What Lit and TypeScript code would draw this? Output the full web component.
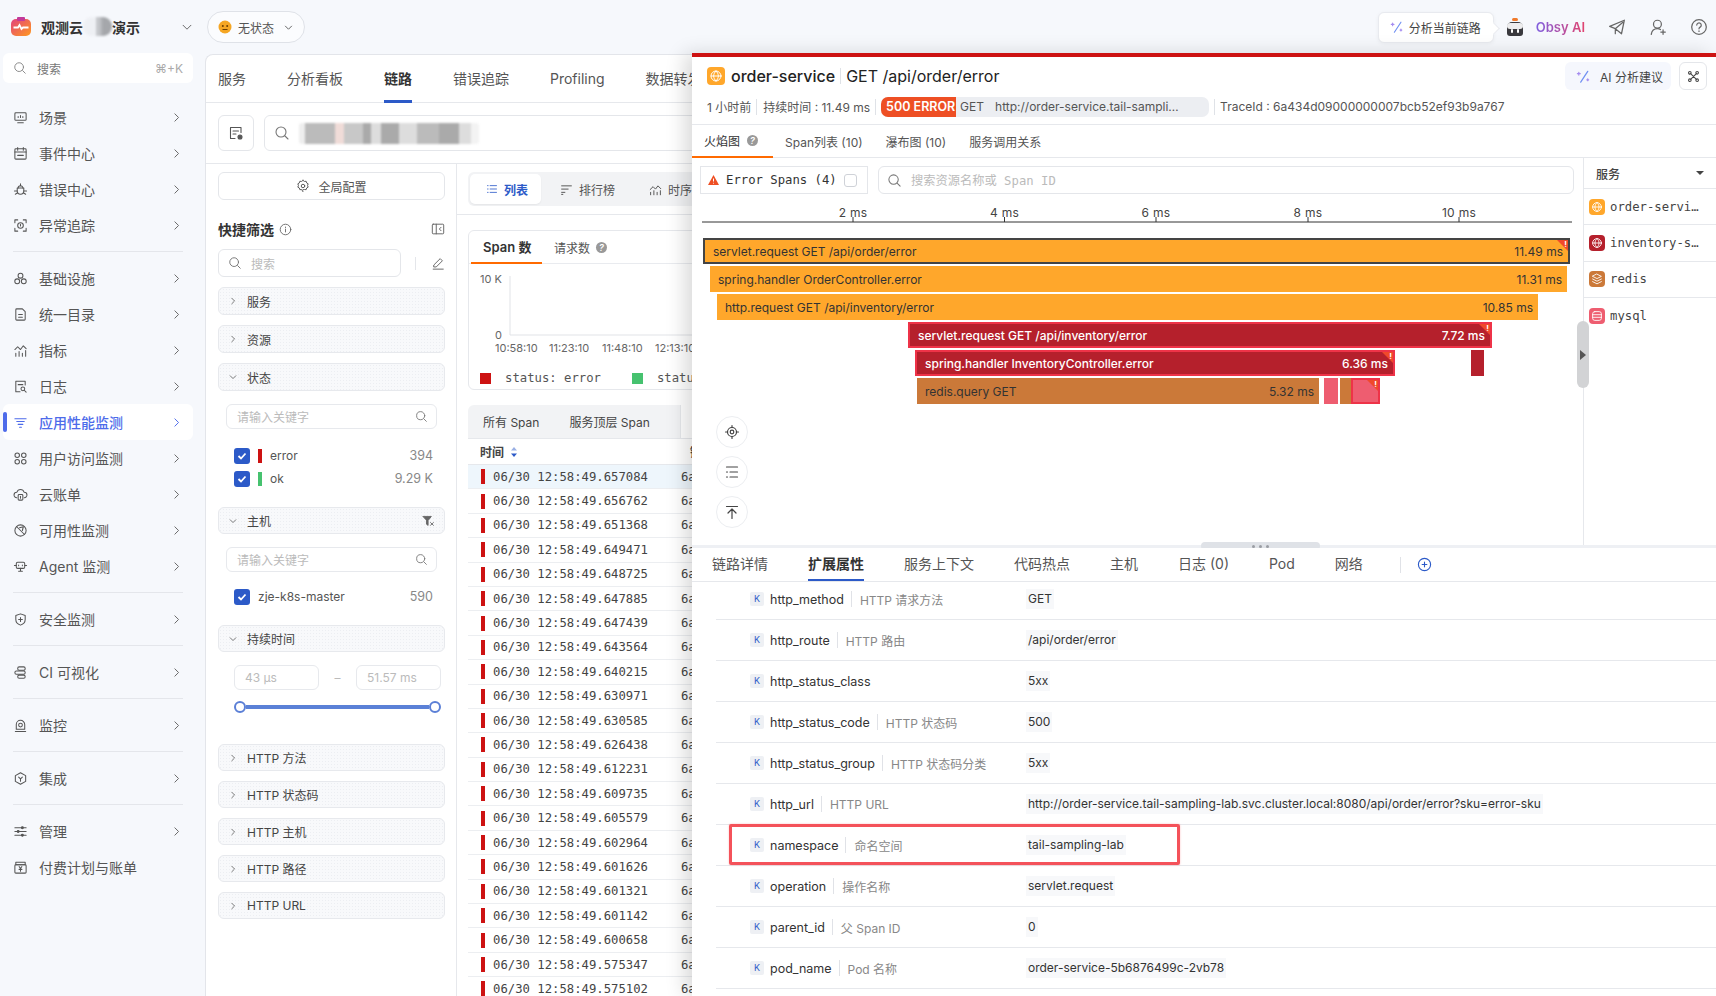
import { LitElement, html, css, svg, nothing } from "lit";
import { customElement } from "lit/decorators.js";

const P: Record<string, any> = {
  search: svg`<circle cx="7" cy="7" r="5"/><path d="M11 11l3 3"/>`,
  right: svg`<path d="M6 3.5L10.5 8 6 12.5"/>`,
  down: svg`<path d="M3.5 6L8 10.5 12.5 6"/>`,
  scene: svg`<rect x="2" y="3" width="12" height="8" rx="1"/><path d="M5 13.5h6M5.5 7v1M8 6v2M10.5 7v1"/>`,
  event: svg`<rect x="2" y="3" width="12" height="11" rx="1"/><path d="M2 6.5h12M5 1.5v3M11 1.5v3M5 10h6"/>`,
  bug: svg`<path d="M5.5 6.5a2.5 2.5 0 0 1 5 0"/><path d="M4.5 6.5h7v3a3.5 3.5 0 0 1-7 0z"/><path d="M1.5 9.5h3M11.5 9.5h3M2.5 13l2.5-1.5M13.5 13L11 11.500M8 2V4"/>`,
  anomaly: svg`<path d="M2 5V2h3M11 2h3v3M14 11v3h-3M5 14H2v-3"/><circle cx="8" cy="8" r="3"/><path d="M8 6.8v1.600"/>`,
  infra: svg`<circle cx="8" cy="5" r="2.600"/><circle cx="4.500" cy="11" r="2.600"/><circle cx="11.500" cy="11" r="2.600"/>`,
  doc: svg`<path d="M4 2h6l3 3v8a1 1 0 0 1-1 1H4a1 1 0 0 1-1-1V3a1 1 0 0 1 1-1z"/><path d="M6 8h4M6 11h4"/>`,
  metric: svg`<path d="M3 14v-3M6.500 14v-5M10 14v-3M13.500 14v-6M2 7l3-3 3 3 3-4 3 3"/>`,
  log: svg`<path d="M13 6.500V2.500H3v11h4.500"/><circle cx="10.500" cy="10.500" r="2"/><path d="M12 12l2 2M5.500 6h5"/>`,
  apm: svg`<path d="M2 4h12M4 7h8M5.500 10h5M7 13h2"/>`,
  rum: svg`<circle cx="4.500" cy="4.500" r="2.400"/><circle cx="11.500" cy="4.500" r="2.400"/><circle cx="4.500" cy="11.500" r="2.400"/><circle cx="11.500" cy="11.500" r="2.400"/>`,
  cloud: svg`<path d="M4 11.500a3 3 0 0 1 .2-6 4 4 0 0 1 7.600 0 3 3 0 0 1 .2 6"/><rect x="5.500" y="8" width="5" height="6" rx="1"/><path d="M8 10v2"/>`,
  gauge: svg`<circle cx="8" cy="8" r="6"/><path d="M4 4l8 8M7 5l4-1-1 4"/>`,
  agent: svg`<rect x="3.500" y="3.500" width="9" height="6.500" rx="1.500"/><path d="M1.500 7h2M12.500 7h2M6 6.500v.8M10 6.500v.8M6 13h4M8 10v3"/>`,
  shield: svg`<path d="M8 2l5 1.800v4.200c0 3-2 5-5 6-3-1-5-3-5-6V3.800z"/><path d="M8 6v4M6 8h4"/>`,
  ci: svg`<rect x="5" y="2" width="8" height="3.600" rx="1.600"/><rect x="2" y="6.500" width="11" height="3.400" rx="1.600"/><rect x="5" y="10.800" width="8" height="3.400" rx="1.600"/>`,
  cam: svg`<path d="M2.500 14.500h11M3.500 12V7a4.500 4.500 0 0 1 9 0v5z"/><circle cx="8" cy="7.500" r="2"/>`,
  hex: svg`<path d="M8 1.800l5.500 3.100v6.200L8 14.200l-5.500-3.100V4.900z"/><path d="M6 6.500l2 2 2-2M8 8.500V11"/>`,
  sliders: svg`<path d="M2 4h12M2 8h12M2 12h12"/><circle cx="10" cy="4" r="1" fill="currentColor"/><circle cx="5.500" cy="8" r="1" fill="currentColor"/><circle cx="10" cy="12" r="1" fill="currentColor"/>`,
  bill: svg`<rect x="2" y="5" width="12" height="9" rx="1"/><path d="M3 2.500h10V5H3zM6.500 7L8 9l1.500-2M8 9v3M6.500 10h3"/>`,
  gear: svg`<path d="M8 1.500l1.600 1.300 2-.2.6 1.900 1.700 1-.7 1.900.7 1.900-1.700 1-.6 1.900-2-.2L8 12.300"/><path d="M8 1.500L6.400 2.800l-2-.2-.6 1.900-1.700 1 .7 1.900-.7 1.900 1.700 1 .6 1.900 2-.2L8 14.500"/><circle cx="8" cy="8" r="2"/>`,
  panel: svg`<rect x="1.500" y="2.500" width="13" height="11" rx="1"/><path d="M6 2.500v11M11.500 6L9.500 8l2 2"/>`,
  info: svg`<circle cx="8" cy="8" r="6.500"/><path d="M8 7.500v3.500M8 5v.6"/>`,
  pen: svg`<path d="M3.500 10L10.500 3l2.500 2.500-7 7H3.500zM2.500 15h11.500"/>`,
  list: svg`<path d="M5.500 3.500H14M5.500 8H14M5.500 12.500H14M2 3.500h.8M2 8h.8M2 12.500h.8"/>`,
  rank: svg`<path d="M2 3.500h12M2 7.500h8M2 11.500h4M2 14h1.500"/>`,
  ts: svg`<path d="M2 14.500v-3M6 14.500v-5M10 14.500v-3M14 14.500v-5M1.500 8l3.500-3.500 3 3 3-4 3.500 3.500"/>`,
  clear: svg`<path d="M1.500 3h10L7.500 8v6l-2-1.500V8z" fill="currentColor"/><path d="M10.500 10.500l3.500 3.500M14 10.500L10.500 14"/>`,
  logbox: svg`<path d="M13 7.500V2.500H2.500v11H7"/><path d="M5 6h5.500M5 9h3"/><circle cx="12" cy="12" r="2" fill="currentColor"/>`,
  wand: svg`<path d="M12.500 2.500L5 14" stroke="#6f8ff2"/><path d="M3 3.500v3M1.500 5h3M12.500 10.500v2M11.500 11.500h2" stroke="#a58cf0"/>`,
  plane: svg`<path d="M14.500 2L1.500 7.500l5 2L13 4M14.500 2L12 14l-5.500-4.500v4.500"/>`,
  user: svg`<circle cx="7.500" cy="5.500" r="3.500"/><path d="M2 14.500c.5-3 2.500-5 5.500-5 1 0 2 .3 2.700.8M12.500 10.500v4M10.500 12.500h4"/>`,
  help: svg`<circle cx="8" cy="8" r="6.500"/><path d="M6 6.300a2 2 0 1 1 3 1.800c-.7.400-1 .8-1 1.500M8 11.500v.4"/>`,
  share: svg`<path d="M4.500 4.500l7 7M11.500 4.500l-7 7"/><circle cx="3.500" cy="3.500" r="1.600"/><circle cx="12.500" cy="3.500" r="1.600"/><circle cx="3.500" cy="12.500" r="1.600"/><circle cx="12.500" cy="12.500" r="1.600"/>`,
  target: svg`<circle cx="8" cy="8" r="4.500"/><circle cx="8" cy="8" r="1.800"/><path d="M8 1.500v2M8 12.500v2M1.500 8h2M12.500 8h2"/>`,
  order: svg`<path d="M2.500 3h11M6 8h7.500M6 13h7.500M2.500 8h1M2.500 13h1"/>`,
  top: svg`<path d="M2.500 2.500h11M8 14.500V5.500M4 9l4-4 4 4"/>`,
  plus: svg`<circle cx="8" cy="8" r="6.500"/><path d="M8 5.500v5M5.500 8h5"/>`,
  globe: svg`<circle cx="8" cy="8" r="5"/><path d="M3 8h10M8 3c-3.200 3-3.200 7 0 10M8 3c3.200 3 3.200 7 0 10"/>`,
  layers: svg`<path d="M8 2.500l5 2.500-5 2.500L3 5zM3 8l5 2.500L13 8M3 11l5 2.500 5-2.500"/>`,
  db: svg`<rect x="3" y="3" width="10" height="10" rx="2.500"/><path d="M3 6.500h10M3 9.500h10"/>`,
};

function ic(name: string, size = 14, w = 1.1) {
  return html`<svg class="i" width=${size} height=${size} viewBox="0 0 16 16" fill="none" stroke="currentColor" stroke-width=${w} stroke-linecap="round" stroke-linejoin="round">${P[name]}</svg>`;
}

type Nav = { t: string; i: string; sep?: boolean; on?: boolean; nc?: boolean };
const NAV: Nav[] = [
  { t: "场景", i: "scene" }, { t: "事件中心", i: "event" }, { t: "错误中心", i: "bug" }, { t: "异常追踪", i: "anomaly", sep: true },
  { t: "基础设施", i: "infra" }, { t: "统一目录", i: "doc" }, { t: "指标", i: "metric" }, { t: "日志", i: "log" },
  { t: "应用性能监测", i: "apm", on: true }, { t: "用户访问监测", i: "rum" }, { t: "云账单", i: "cloud" }, { t: "可用性监测", i: "gauge" },
  { t: "Agent 监测", i: "agent", sep: true }, { t: "安全监测", i: "shield", sep: true }, { t: "CI 可视化", i: "ci", sep: true },
  { t: "监控", i: "cam", sep: true }, { t: "集成", i: "hex", sep: true }, { t: "管理", i: "sliders" }, { t: "付费计划与账单", i: "bill", nc: true },
];
const TIMES = ["657084","656762","651368","649471","648725","647885","647439","643564","640215","630971","630585","626438","612231","609735","605579","602964","601626","601321","601142","600658","575347","575102"];
const C = { orange: "#ffa72b", red: "#b5202c", brown: "#cb7939", pink: "#ee5d70" };
type Bar = { x: number; w: number; y: number; c: string; b?: string; l?: string; d?: string; lx?: number; white?: boolean; flag?: boolean };
const BARS: Bar[] = [
  { x: 11, w: 867, y: 44, c: C.orange, b: "#444", l: "servlet.request GET /api/order/error", d: "11.49 ms", flag: true },
  { x: 18, w: 857, y: 72, c: C.orange, l: "spring.handler OrderController.error", d: "11.31 ms" },
  { x: 25, w: 821, y: 100, c: C.orange, l: "http.request GET /api/inventory/error", d: "10.85 ms" },
  { x: 216, w: 584, y: 128, c: C.red, b: "#ee3348", white: true, l: "servlet.request GET /api/inventory/error", d: "7.72 ms", flag: true },
  { x: 223, w: 480, y: 156, c: C.red, b: "#ee3348", white: true, l: "spring.handler InventoryController.error", d: "6.36 ms", flag: true },
  { x: 779, w: 12, y: 156, c: C.red },
  { x: 225, w: 402, y: 184, c: C.brown, l: "redis.query GET", d: "5.32 ms" },
  { x: 632, w: 14, y: 184, c: C.pink },
  { x: 648, w: 8, y: 184, c: C.brown },
  { x: 659, w: 29, y: 184, c: C.pink, b: "#ee3348", flag: true },
];
const SERVICES = [
  { n: "order-servi…", c: C.orange, i: "globe" }, { n: "inventory-s…", c: C.red, i: "globe" },
  { n: "redis", c: C.brown, i: "layers" }, { n: "mysql", c: C.pink, i: "db" },
];
const ATTRS = [
  ["http_method", "HTTP 请求方法", "GET"], ["http_route", "HTTP 路由", "/api/order/error"], ["http_status_class", "", "5xx"],
  ["http_status_code", "HTTP 状态码", "500"], ["http_status_group", "HTTP 状态码分类", "5xx"],
  ["http_url", "HTTP URL", "http://order-service.tail-sampling-lab.svc.cluster.local:8080/api/order/error?sku=error-sku"],
  ["namespace", "命名空间", "tail-sampling-lab"], ["operation", "操作名称", "servlet.request"], ["parent_id", "父 Span ID", "0"],
  ["pod_name", "Pod 名称", "order-service-5b6876499c-2vb78"],
];
const URL_T = "http://order-service.tail-sampling-lab.svc.cluster.local:8080/api/order/error?sku=error-sku";

@customElement("app-root")
export class AppRoot extends LitElement {
  static styles = css`
    :host { display: block; width: 1716px; height: 996px; overflow: hidden; position: relative; background: #f6f8fc; color: #333;
      font-family: Inter, "Noto Sans CJK SC", sans-serif; font-size: 12px; }
    * { box-sizing: border-box; }
    .i { flex: none; display: block; }
    .mono { font-family: "DejaVu Sans Mono", "Noto Sans CJK SC", monospace; font-size: 12.25px; }
    .app { display: flex; height: 100%; }
    .side { width: 205px; flex: none; padding: 0 12px 0 3px; }
    .brand { height: 53px; display: flex; align-items: center; padding: 0 0 0 8px; font-size: 14px; font-weight: 600; color: #333; }
    .brand svg.logo { margin-right: 10px; }
    .mask { width: 29px; height: 19px; margin-top: 0; border-radius: 9px; filter: blur(1px);
      background: linear-gradient(90deg, #eef0f4 0 45%, #c6c8cc 45% 55%, #a5a7ab 70% 100%); }
    .brand .caret { margin-left: auto; margin-right: -1px; color: #666; }
    .ssearch { height: 30px; background: #fff; border-radius: 6px; display: flex; align-items: center; padding: 0 10px; color: #888; margin-bottom: 16px; }
    .ssearch span { margin-left: 10px; font-size: 12px; color: #777; flex: 1; }
    .ssearch b { font-weight: 400; font-size: 12px; color: #aaa; }
    .nav { height: 36px; display: flex; align-items: center; padding: 0 8px 0 10px; color: #555; font-size: 14px; border-radius: 6px; position: relative; }
    .nav .t { margin-left: 11px; flex: 1; }
    .nav .i:last-child { margin-right: 2px; color: #666; }
    .nav.on { background: #fff; color: #4d6bea; font-weight: 500; }
    .nav.on .i:last-child { color: #4d6bea; }
    .nav.on::before { content: ""; position: absolute; left: 0; top: 8px; width: 4px; height: 20px; border-radius: 2px; background: #4d6bea; }
    .hr { height: 1px; margin: 8px 10px; background: #e4e6eb; }

    .col { flex: 1; display: flex; flex-direction: column; min-width: 0; }
    .top { height: 54px; flex: none; display: flex; align-items: center; padding: 0 8px 0 2px; }
    .pill { width: 98px; height: 32px; border: 1px solid #dfe2e8; border-radius: 16px; background: #fbfcfe; display: flex; align-items: center; gap: 6px; padding: 0 10px; color: #555; }
    .pill .i:last-child { margin-left: auto; }
    .spacer { flex: 1; }
    .bubble { width: 116px; height: 31px; background: #fff; border: 1px solid #e8eaef; border-radius: 6px; display: flex; align-items: center; gap: 5px; padding-left: 11px; color: #444; box-shadow: 0 1px 4px rgba(0,0,0,.05); position: relative; }
    .bubble::after { content: ""; position: absolute; right: -5px; top: 11px; width: 8px; height: 8px; background: #fff; transform: rotate(45deg); border-top: 1px solid #e8eaef; border-right: 1px solid #e8eaef; }
    .robot { margin-left: 12px; }
    .obsy { margin-left: 12px; font-size: 13px; font-weight: 600; background: linear-gradient(90deg, #7f5fe0, #e2446f); -webkit-background-clip: text; background-clip: text; color: transparent; }
    .tico { margin-left: 23px; color: #666; }
    .obsy + .tico { margin-left: 23px; }

    .panel { flex: 1; min-height: 0; background: #fff; border: 1px solid #e3e5ea; border-right: 0; border-bottom: 0; border-top-left-radius: 8px; display: flex; flex-direction: column; overflow: hidden; }
    .ptabs { height: 48px; flex: none; border-bottom: 1px solid #e6e8ec; display: flex; gap: 41px; padding-left: 12px; font-size: 14px; color: #555; }
    .ptabs span { line-height: 47px; height: 48px; white-space: nowrap; }
    .ptabs .on { color: #333; font-weight: 600; border-bottom: 3px solid #2c5ac8; }
    .qrow { height: 61px; flex: none; border-bottom: 1px solid #e6e8ec; padding: 12px 0 0 12px; display: flex; gap: 10px; }
    .ibtn { width: 36px; height: 36px; border: 1px solid #e4e6ea; border-radius: 6px; display: flex; align-items: center; justify-content: center; color: #555; }
    .qbox { flex: 1; height: 36px; border: 1px solid #e4e6ea; border-radius: 6px; display: flex; align-items: center; padding-left: 9px; color: #777; gap: 9px; }
    .blurred { width: 180px; height: 21px; border-radius: 3px; filter: blur(1px);
      background: linear-gradient(90deg, #eee 0 6px, #bbb 6px 36px, #f0dcd8 36px 45px, #c8c8c8 45px 64px, #aaa 64px 72px, #ddd 72px 82px, #aaa 82px 100px, #ddd 100px 118px, #bbb 118px 140px, #aaa 140px 160px, #ddd 160px 172px, #f3f3f3 172px); }

    .body { flex: 1; min-height: 0; display: flex; }
    .filters { width: 251px; flex: none; border-right: 1px solid #e6e8ec; padding: 8px 11px 0 12px; }
    .cfg { height: 28px; border: 1px solid #e4e6ea; border-radius: 6px; display: flex; align-items: center; justify-content: center; gap: 8px; color: #555; }
    .fhead { height: 20px; margin-top: 19px; display: flex; align-items: center; font-size: 14px; font-weight: 600; gap: 5px; }
    .fhead .i { color: #666; }
    .fhead .i:last-child { margin-left: auto; }
    .fsearch { margin-top: 10px; display: flex; align-items: center; }
    .fsearch .inp { width: 183px; height: 28px; border: 1px solid #e4e6ea; border-radius: 6px; display: flex; align-items: center; padding-left: 9px; gap: 9px; color: #777; }
    .fsearch .inp span { color: #bbb; }
    .fsearch .bar { width: 1px; height: 13px; background: #e4e6ea; margin-left: 14px; }
    .fsearch .i:last-child { margin-left: auto; color: #666; }
    .grp { height: 28px; margin-top: 10px; border: 1px solid #e7e9ed; border-radius: 6px; display: flex; align-items: center; padding: 0 9px; gap: 9px; color: #444;
      background-color: #f8f9fb; background-image: radial-gradient(#eceef2 .6px, transparent .7px); background-size: 3px 3px; }
    .grp.s { height: 27px; }
    .grp.after { margin-top: 17px; }
    .grp.far { margin-top: 31px; }
    .grp .i { color: #666; }
    .grp .i:last-child:not(:first-child) { margin-left: auto; }
    .finp { height: 25px; margin: 13px 8px 0; border: 1px solid #e7e9ed; border-radius: 6px; display: flex; align-items: center; justify-content: space-between; padding: 0 8px 0 10px; color: #bbb; }
    .finp .i { color: #777; }
    .opts { margin-top: 15px; }
    .opts.z { margin-top: 13px; }
    .opt { height: 23px; padding: 0 12px 0 16px; display: flex; align-items: center; color: #555; }
    .chk { width: 16px; height: 16px; border-radius: 3px; background: #2c5ac8; display: flex; align-items: center; justify-content: center; margin-right: 8px; color: #fff; flex: none; }
    .mark { width: 4px; height: 14px; margin-right: 8px; }
    .opt .n { margin-left: auto; color: #888; font-size: 12.500px; }
    .dur { margin: 13px 4px 0 16px; display: flex; align-items: center; justify-content: space-between; color: #bbb; font-size: 12px; }
    .dur div { width: 85px; height: 25px; border: 1px solid #e7e9ed; border-radius: 6px; padding-left: 10px; line-height: 23px; }
    .slider { margin: 11px 4px 0 16px; height: 12px; display: flex; align-items: center; }
    .slider i { width: 12px; height: 12px; border: 2px solid #5b7fd6; border-radius: 50%; background: #fff; flex: none; }
    .slider b { flex: 1; height: 4px; background: #5b81d7; }

    .main { flex: 1; min-width: 0; }
    .vt { padding: 8px 0 8px 11px; border-bottom: 1px solid #e6e8ec; }
    .seg { height: 34px; background: #f2f3f5; border-radius: 6px; display: flex; align-items: center; padding: 0 2px; color: #555; }
    .seg > span { display: flex; align-items: center; gap: 6px; height: 30px; padding: 0 15px 0 16px; margin-right: 3px; white-space: nowrap; }
    .seg .on { background: #fff; border-radius: 5px; color: #2c5ac8; font-weight: 600; box-shadow: 0 1px 2px rgba(0,0,0,.06); width: 71px; }
    .card { margin: 15px 0 0 11px; height: 160px; border: 1px solid #e6e8ec; border-radius: 6px; }
    .ctabs { height: 33px; border-bottom: 1px solid #e9ebef; display: flex; padding-left: 2px; }
    .ctabs span { display: flex; align-items: center; height: 33px; }
    .ctabs .on { width: 71px; padding-left: 12px; font-weight: 600; color: #333; border-bottom: 2px solid #ff6a00; margin-right: 12px; font-size: 13px; }
    .ctabs .q { gap: 6px; color: #555; }
    .qd { width: 11px; height: 11px; border-radius: 50%; background: #999; color: #fff; font-size: 9px; display: inline-flex; align-items: center; justify-content: center; font-weight: 600; flex: none; }
    .chart text { font-family: Inter, sans-serif; font-size: 11px; fill: #666; }
    .legend { display: flex; align-items: center; padding-left: 11px; height: 24px; margin-top: 0; color: #555; white-space: nowrap; }
    .legend i { width: 11px; height: 11px; margin-right: 14px; flex: none; }
    .legend span { margin-right: 31px; }
    .ttabs { margin: 15px 0 0 11px; height: 34px; background: #f2f3f5; border-bottom: 1px solid #e6e8ec; display: flex; align-items: center; color: #444; white-space: nowrap; border-radius: 6px 0 0 0; }
    .ttabs span { padding: 0 15px; margin-right: 0; }
    .ttabs span + span { margin-right: 15px; }
    .ttabs .on { align-self: stretch; background: #fff; color: #2c5ac8; border-left: 1px solid #e6e8ec; line-height: 33px; margin-left: 0; }
    .thead { margin-left: 11px; height: 26px; display: flex; align-items: center; font-weight: 600; color: #444; gap: 5px; padding-left: 12px; border-bottom: 1px solid #e6e8ec; position: relative; white-space: nowrap; }
    .thead .lnk { margin-left: 166px; }
    .row { margin-left: 11px; height: 24.400px; border-bottom: 1px solid #eceef1; display: flex; align-items: center; padding-left: 13px; white-space: nowrap; color: #444; }
    .row.on { background: linear-gradient(90deg, #eef6fc 85%, #f6fafd); }
    .row i { width: 4px; height: 15px; background: #cd1212; margin-right: 8px; flex: none; }
    .row .tid { margin-left: 33px; }

    .drawer { position: absolute; left: 692px; top: 53px; right: 0; bottom: 0; background: #fff; border-top: 4px solid #cd1212; box-shadow: -8px 0 18px rgba(0,0,0,.14); display: flex; flex-direction: column; }
    .dt { height: 38px; flex: none; display: flex; align-items: center; padding: 0 9px 0 15px; font-size: 16px; color: #222; }
    .svc { border-radius: 4px; display: flex; align-items: center; justify-content: center; color: #fff; flex: none; }
    .dt .name { margin-left: 6px; font-weight: 500; }
    .vbar { width: 1px; height: 16px; background: #dfe2e7; margin: 0 5px; flex: none; }
    .ai { margin-left: auto; width: 106px; height: 28px; border-radius: 6px; background: #f5f7fd; display: flex; align-items: center; gap: 9px; padding-left: 11px; font-size: 12px; color: #444; }
    .sh { margin-left: 8px; width: 28px; height: 28px; border: 1px solid #e4e6ea; border-radius: 6px; display: flex; align-items: center; justify-content: center; color: #444; }
    .meta { height: 30px; flex: none; padding: 0 0 6px 15px; border-bottom: 1px solid #e6e8ec; display: flex; align-items: center; color: #555; white-space: nowrap; }
    .tagbox { margin-left: 0; display: flex; align-items: center; width: 328px; height: 20px; background: #eceef2; border-radius: 7px; overflow: hidden; }
    .tagbox b { background: #ee4f24; color: #fff; height: 20px; line-height: 20px; padding: 0 5px; font-size: 12.500px; font-weight: 600; width: 75px; flex: none; white-space: nowrap; }
    .tagbox span { margin-left: 4px; }
    .tagbox em { font-style: normal; margin-left: 11px; width: 190px; overflow: hidden; text-overflow: ellipsis; }
    .dtabs { height: 33px; flex: none; border-bottom: 1px solid #e6e8ec; display: flex; padding-left: 12px; color: #555; white-space: nowrap; }
    .dtabs span { display: flex; align-items: center; gap: 7px; height: 33px; margin-right: 23px; }
    .dtabs .on { color: #333; margin-left: -12px; padding: 0 13px 0 12px; width: 81px; border-bottom: 2px solid #ff6a00; margin-right: 12px; }
    .flame { height: 387px; flex: none; display: flex; position: relative; }
    .fl { flex: 1; min-width: 0; display: flex; flex-direction: column; }
    .tool { flex: none; padding: 8px 9px 0 8px; display: flex; gap: 10px; }
    .errs { width: 168px; height: 28px; border: 1px solid #e4e6ea; display: flex; align-items: center; padding-left: 7px; gap: 7px; font-weight: 500; color: #333; }
    .errs u { width: 13px; height: 13px; border: 1px solid #cfd2d8; border-radius: 3px; margin-left: 0; }
    .sbox { flex: 1; height: 28px; border: 1px solid #e4e6ea; border-radius: 6px; display: flex; align-items: center; padding-left: 8px; gap: 9px; color: #777; }
    .sbox span { color: #bbb; }
    .canvas { flex: 1; position: relative; overflow: hidden; }
    .ruler { display: block; }
    .ruler text { font-family: Inter, sans-serif; font-size: 12px; fill: #444; letter-spacing: .3px; text-anchor: middle; }
    .b { position: absolute; height: 26px; display: flex; align-items: center; justify-content: space-between; padding: 0 5px 0 8px; color: #333; white-space: nowrap; overflow: hidden; }
    .b.bd { border: 2px solid; }
    .b.w { color: #fff; font-weight: 500; }
    .flag { position: absolute; right: 0; top: 0; width: 11px; height: 11px; background: #f0492a; clip-path: polygon(0 0, 100% 0, 100% 100%); color: #fff; font-size: 8px; line-height: 8px; text-align: right; padding-right: 1px; font-weight: 700; }
    .fb { position: absolute; left: 24px; width: 32px; height: 32px; border-radius: 50%; background: #fff; border: 1px solid #eceef1; display: flex; align-items: center; justify-content: center; color: #444; }
    .fr { width: 133px; flex: none; border-left: 1px solid #e6e8ec; }
    .fr .hd { height: 31px; border-bottom: 1px solid #e6e8ec; display: flex; align-items: center; padding: 0 12px; font-weight: 500; font-size: 12px; justify-content: space-between; color: #444; }
    .caret { width: 0; height: 0; border: 4px solid transparent; border-top: 4px solid #444; margin-top: 4px; }
    .fr .it { height: 36.300px; border-bottom: 1px solid #e6e8ec; display: flex; align-items: center; padding-left: 5px; gap: 5px; color: #444; }
    .fr .it:last-child { border: 0; }
    .grip { position: absolute; left: 885px; top: 163px; width: 12px; height: 67px; border-radius: 6px; background: #d2d3d5; display: flex; align-items: center; justify-content: center; }
    .grip::after { content: ""; border: 5px solid transparent; border-left: 6px solid #555; border-right: 0; }
    .split { height: 3px; flex: none; background: #eef0f4; position: relative; }
    .hdl { position: absolute; left: 509px; top: -3px; width: 119px; height: 8px; border-radius: 4px; background: #dfe2e7; display: flex; gap: 4px; justify-content: center; align-items: center; }
    .hdl i { width: 3px; height: 3px; border-radius: 50%; background: #9a9da3; }
    .ltabs { height: 34px; flex: none; border-bottom: 1px solid #e6e8ec; display: flex; align-items: center; font-size: 14px; color: #555; padding-left: 20px; white-space: nowrap; position: relative; z-index: 1; background: #fff; }
    .ltabs span { height: 33px; line-height: 32px; margin-right: 40px; }
    .ltabs .on { font-weight: 600; color: #333; border-bottom: 2px solid #2c5ac8; }
    .ltabs .lvb { width: 1px; height: 16px; background: #e0e2e7; margin: 0 16px 0 -3px; }
    .ltabs .i { color: #2c5ac8; }
    .attrs { flex: 1; overflow: hidden; }
    .attr { height: 41px; margin-left: 24px; border-bottom: 1px solid #e6e8ec; padding-left: 34px; display: flex; align-items: center; white-space: nowrap; color: #333; font-size: 12px; }
    .attr:first-child { margin-top: -3px; }
    .k { width: 14px; height: 14px; border-radius: 2px; background: #eef0f4; color: #2c5ac8; font-size: 9px; line-height: 14px; text-align: center; margin-right: 6px; flex: none; }
    .key { width: 256px; flex: none; display: flex; align-items: center; font-size: 12.500px; }
    .key .s { width: 1px; height: 16px; background: #e0e2e7; margin: 0 8px 0 7px; }
    .key em { font-style: normal; color: #888; font-size: 12px; }
    .val { background: #f7f8fa; padding: 0 2px; height: 20px; line-height: 20px; }
    .anno { position: absolute; left: 37px; top: 767px; width: 451px; height: 41px; border: 3px solid #f4525a; border-radius: 2px; box-shadow: 0 0 2px rgba(244,82,90,.4); pointer-events: none; }
  `;

  private renderSide() {
    return html`<aside class="side">
      <div class="brand">
        <svg class="logo" width="20" height="20" viewBox="0 0 20 20"><defs><linearGradient id="lg" x1="0" y1="0" x2="1" y2="1"><stop offset="0" stop-color="#e2427e"/><stop offset="1" stop-color="#ff9a1f"/></linearGradient></defs><rect y="2" width="20" height="17" rx="5" fill="url(#lg)"/><rect x="6" y="0" width="8" height="4" rx="1" fill="#c23a9a"/><path d="M2.500 10.500H7l1.500-2.500 2 4 1.500-1.500h5.500" stroke="#fff" stroke-width="1.800" fill="none"/></svg>
        观测云<span class="mask"></span>演示
        <span class="caret" style="border:0;width:auto;height:auto;margin-top:0">${ic("down", 14)}</span>
      </div>
      <div class="ssearch">${ic("search", 14)}<span>搜索</span><b>⌘+K</b></div>
      ${NAV.map((n) => html`<div class="nav ${n.on ? "on" : ""}">${ic(n.i, 15)}<span class="t">${n.t}</span>${n.nc ? nothing : ic("right", 13, 1.2)}</div>${n.sep ? html`<div class="hr"></div>` : nothing}`)}
    </aside>`;
  }

  private renderTop() {
    return html`<div class="top">
      <div class="pill"><svg width="14" height="14" viewBox="0 0 14 14"><circle cx="7" cy="7" r="6.500" fill="#f5a623"/><circle cx="4.800" cy="6" r="1" fill="#6b3d00"/><circle cx="9.200" cy="6" r="1" fill="#6b3d00"/><path d="M4.500 9.500h5" stroke="#6b3d00" stroke-width="1"/></svg>无状态${ic("down", 11, 1.3)}</div>
      <div class="spacer"></div>
      <div class="bubble">${ic("wand", 14, 1.3)}<span>分析当前链路</span></div>
      <svg class="robot" width="18" height="19" viewBox="0 0 18 19"><rect x="6" y="0" width="6" height="3" rx="1.500" fill="#f07a2b"/><path d="M1 9a5 5 0 0 1 5-5h6a5 5 0 0 1 5 5v6a3 3 0 0 1-3 3H4a3 3 0 0 1-3-3z" fill="#3a3a3e"/><rect x="1" y="5" width="16" height="6" rx="3" fill="#ededee"/><rect x="5" y="11" width="2" height="4" rx="1" fill="#fff"/><rect x="11" y="11" width="2" height="4" rx="1" fill="#fff"/></svg>
      <span class="obsy">Obsy AI</span>
      <span class="tico">${ic("plane", 18, 1.1)}</span><span class="tico">${ic("user", 18, 1.1)}</span><span class="tico">${ic("help", 18, 1.1)}</span>
    </div>`;
  }

  private renderFilters() {
    const grp = (t: string, open = false, cls = "", end: any = nothing) => html`<div class="grp ${cls}">${ic(open ? "down" : "right", 10, 1.4)}<span>${t}</span>${end}</div>`;
    const chk = html`<span class="chk"><svg width="10" height="10" viewBox="0 0 10 10" fill="none" stroke="#fff" stroke-width="1.800"><path d="M1.500 5l2.500 2.500 4.500-5"/></svg></span>`;
    return html`<div class="filters">
      <div class="cfg">${ic("gear", 14)}<span>全局配置</span></div>
      <div class="fhead">快捷筛选${ic("info", 13)}${ic("panel", 14)}</div>
      <div class="fsearch"><div class="inp">${ic("search", 14)}<span>搜索</span></div><div class="bar"></div>${ic("pen", 14)}</div>
      ${grp("服务")}${grp("资源")}${grp("状态", true)}
      <div class="finp">请输入关键字${ic("search", 13)}</div>
      <div class="opts">
        <div class="opt">${chk}<i class="mark" style="background:#cd1212"></i>error<span class="n">394</span></div>
        <div class="opt">${chk}<i class="mark" style="background:#46c26f"></i>ok<span class="n">9.29 K</span></div>
      </div>
      ${grp("主机", true, "s after", html`<span style="margin-left:auto;color:#555">${ic("clear", 13)}</span>`)}
      <div class="finp">请输入关键字${ic("search", 13)}</div>
      <div class="opts z"><div class="opt">${chk}zje-k8s-master<span class="n">590</span></div></div>
      ${grp("持续时间", true, "s after")}
      <div class="dur"><div>43 µs</div><span>–</span><div>51.57 ms</div></div>
      <div class="slider"><i></i><b></b><i></i></div>
      ${grp("HTTP 方法", false, "s far")}${grp("HTTP 状态码", false, "s")}${grp("HTTP 主机", false, "s")}${grp("HTTP 路径", false, "s")}${grp("HTTP URL", false, "s")}
    </div>`;
  }

  private renderMain() {
    const xs = [["10:58:10", 26], ["11:23:10", 80], ["11:48:10", 133], ["12:13:10", 186], ["12:38:10", 239]];
    return html`<div class="main">
      <div class="vt"><div class="seg"><span class="on">${ic("list", 12, 1.1)}列表</span><span>${ic("rank", 13, 1.2)}排行榜</span><span>${ic("ts", 13, 1.2)}时序图</span></div></div>
      <div class="card">
        <div class="ctabs"><span class="on">Span 数</span><span class="q">请求数<i class="qd">?</i></span></div>
        <svg class="chart" width="260" height="102" viewBox="0 0 260 102" style="display:block">
          <text x="11" y="19">10 K</text><text x="26" y="75">0</text>
          <path d="M41 12V71H260" stroke="#e1e3e7" fill="none"/>
          ${xs.map(([t, x]) => svg`<text x=${x} y="88">${t}</text>`)}
        </svg>
        <div class="legend"><i style="background:#cd1212"></i><span class="mono">status: error</span><i style="background:#46c26f"></i><span class="mono">status: ok</span></div>
      </div>
      <div class="ttabs"><span>所有 Span</span><span>服务顶层 Span</span><span class="on">所有</span></div>
      <div class="thead">时间<svg width="10" height="12" viewBox="0 0 10 12"><path d="M5 1l3 3.500H2z" fill="#9ab0e4"/><path d="M5 11l3-3.500H2z" fill="#2c5ac8"/></svg><span class="lnk">链路 ID</span></div>
      ${TIMES.map((t, i) => html`<div class="row ${i === 0 ? "on" : ""}"><i></i><span class="mono">06/30 12:58:49.${t}</span><span class="mono tid">6a434d09000000007bcb52ef93b9a767</span></div>`)}
    </div>`;
  }

  private renderFlame() {
    const ticks = [161, 312.500, 464, 616, 767];
    return html`<div class="flame">
      <div class="fl">
        <div class="tool">
          <div class="errs mono"><svg width="11" height="10" viewBox="0 0 11 10"><path d="M5.500 0L11 10H0z" fill="#ee4f24"/><path d="M5.500 3.500v3M5.500 7.800v.8" stroke="#fff"/></svg>Error Spans (4)<u></u></div>
          <div class="sbox">${ic("search", 15)}<span class="mono">搜索资源名称或 Span ID</span></div>
        </div>
        <div class="canvas">
          <svg class="ruler" width="891" height="36" viewBox="0 0 891 36">
            <path d="M10 28H880" stroke="#333" fill="none"/>
            ${ticks.map((x, i) => svg`<path d="M${x} 28v-5" stroke="#333"/><text x=${x} y="23">${(i + 1) * 2} ms</text>`)}
          </svg>
          ${BARS.map((b) => html`<div class="b ${b.b ? "bd" : ""} ${b.white ? "w" : ""}" style="left:${b.x}px;top:${b.y}px;width:${b.w}px;background:${b.c};${b.b ? `border-color:${b.b}` : ""}"><span>${b.l ?? ""}</span><span>${b.d ?? ""}</span>${b.flag ? html`<span class="flag">!</span>` : nothing}</div>`)}
          <div class="fb" style="top:222px">${ic("target", 16, 1.2)}</div>
          <div class="fb" style="top:262px">${ic("order", 16, 1.2)}</div>
          <div class="fb" style="top:302px">${ic("top", 16, 1.2)}</div>
        </div>
      </div>
      <div class="fr">
        <div class="hd">服务<i class="caret"></i></div>
        ${SERVICES.map((s) => html`<div class="it"><span class="svc" style="width:16px;height:16px;background:${s.c}">${ic(s.i, 14, 1)}</span><span class="mono">${s.n}</span></div>`)}
      </div>
      <div class="grip"></div>
    </div>`;
  }

  private renderDrawer() {
    const tabs = ["链路详情", "扩展属性", "服务上下文", "代码热点", "主机", "日志 (0)", "Pod", "网络"];
    return html`<div class="drawer">
      <div class="dt"><span class="svc" style="width:18px;height:18px;background:${C.orange}">${ic("globe", 16, 1)}</span><span class="name">order-service</span><span class="vbar"></span><span>GET /api/order/error</span>
        <div class="ai">${ic("wand", 15, 1.3)}AI 分析建议</div><div class="sh">${ic("share", 13, 1.3)}</div></div>
      <div class="meta"><span>1 小时前</span><span class="vbar" style="margin:0 6px 0 5px"></span><span>持续时间 : 11.49 ms</span><span class="vbar" style="margin:0 5px"></span>
        <div class="tagbox"><b>500 ERROR</b><span>GET</span><em>${URL_T}</em></div>
        <span class="vbar" style="margin:0 5px"></span><span>TraceId : 6a434d09000000007bcb52ef93b9a767</span></div>
      <div class="dtabs"><span class="on">火焰图<i class="qd">?</i></span><span>Span列表 (10)</span><span>瀑布图 (10)</span><span>服务调用关系</span></div>
      ${this.renderFlame()}
      <div class="split"><div class="hdl"><i></i><i></i><i></i></div></div>
      <div class="ltabs">${tabs.map((t) => html`<span class=${t === "扩展属性" ? "on" : ""}>${t}</span>`)}<i class="lvb"></i>${ic("plus", 15, 1.2)}</div>
      <div class="attrs">${ATTRS.map(([k, l, v]) => html`<div class="attr"><span class="k">K</span><div class="key"><span>${k}</span>${l ? html`<i class="s"></i><em>${l}</em>` : nothing}</div><span class="val">${v}</span></div>`)}</div>
      <div class="anno"></div>
    </div>`;
  }

  render() {
    return html`<div class="app">
      ${this.renderSide()}
      <div class="col">
        ${this.renderTop()}
        <div class="panel">
          <div class="ptabs"><span>服务</span><span>分析看板</span><span class="on">链路</span><span>错误追踪</span><span>Profiling</span><span>数据转发</span></div>
          <div class="qrow"><div class="ibtn">${ic("logbox", 16)}</div><div class="qbox">${ic("search", 16)}<div class="blurred"></div></div></div>
          <div class="body">${this.renderFilters()}${this.renderMain()}</div>
        </div>
      </div>
      ${this.renderDrawer()}
    </div>`;
  }
}
